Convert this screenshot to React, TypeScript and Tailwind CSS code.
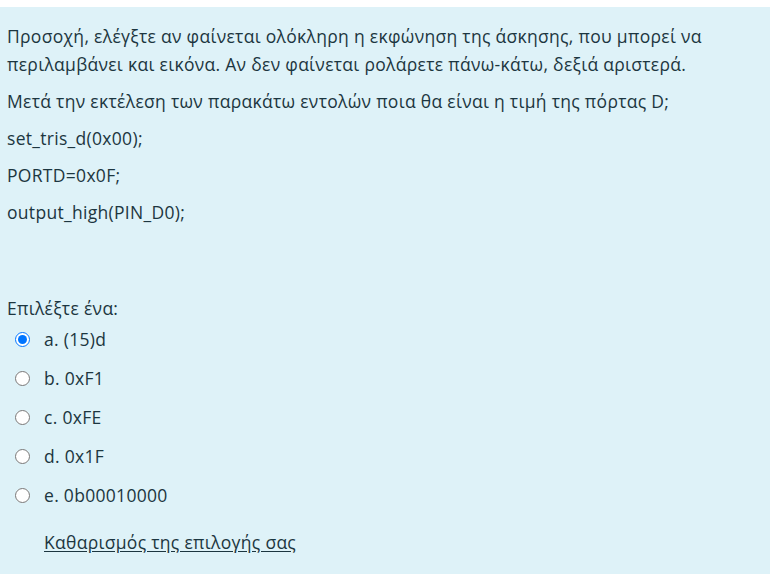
import { useState } from 'react';

const options = [
  { id: 'a', label: 'a. (15)d' },
  { id: 'b', label: 'b. 0xF1' },
  { id: 'c', label: 'c. 0xFE' },
  { id: 'd', label: 'd. 0x1F' },
  { id: 'e', label: 'e. 0b00010000' },
];

export default function App() {
  const [answer, setAnswer] = useState<string | null>('a');

  return (
    <div
      className="min-h-screen bg-white pt-[7px] text-[17.5px] leading-[27px] tracking-[0.3px] text-[#1c3640]"
      style={{ fontFamily: '"Open Sans", "Noto Sans", sans-serif' }}
    >
      <div className="min-h-[567px] bg-[#def2f8] px-[7px] pt-[15px] pb-4">
        <div className="space-y-[9px] leading-[28px]">
          <p>
            Προσοχή, ελέγξτε αν φαίνεται ολόκληρη η εκφώνηση της άσκησης, που μπορεί να
            <br />
            περιλαμβάνει και εικόνα. Αν δεν φαίνεται ρολάρετε πάνω-κάτω, δεξιά αριστερά.
          </p>
          <p>Μετά την εκτέλεση των παρακάτω εντολών ποια θα είναι η τιμή της πόρτας D;</p>
          <p>set_tris_d(0x00);</p>
          <p>PORTD=0x0F;</p>
          <p>output_high(PIN_D0);</p>
        </div>

        <div className="mt-[69px]">
          <div>Επιλέξτε ένα:</div>
          <div className="-mt-[2px] flex flex-col">
            {options.map((o) => (
              <label key={o.id} className="flex h-[39px] cursor-pointer items-center pl-[8px]">
                <input
                  type="radio"
                  name="q"
                  checked={answer === o.id}
                  onChange={() => setAnswer(o.id)}
                  className="m-0 h-[15px] w-[15px]"
                />
                <span className="ml-[14px]">{o.label}</span>
              </label>
            ))}
          </div>
          <div className="mt-[14px] pl-[37px]">
            <button
              type="button"
              onClick={() => setAnswer(null)}
              className="underline underline-offset-2"
            >
              Καθαρισμός της επιλογής σας
            </button>
          </div>
        </div>
      </div>
    </div>
  );
}
